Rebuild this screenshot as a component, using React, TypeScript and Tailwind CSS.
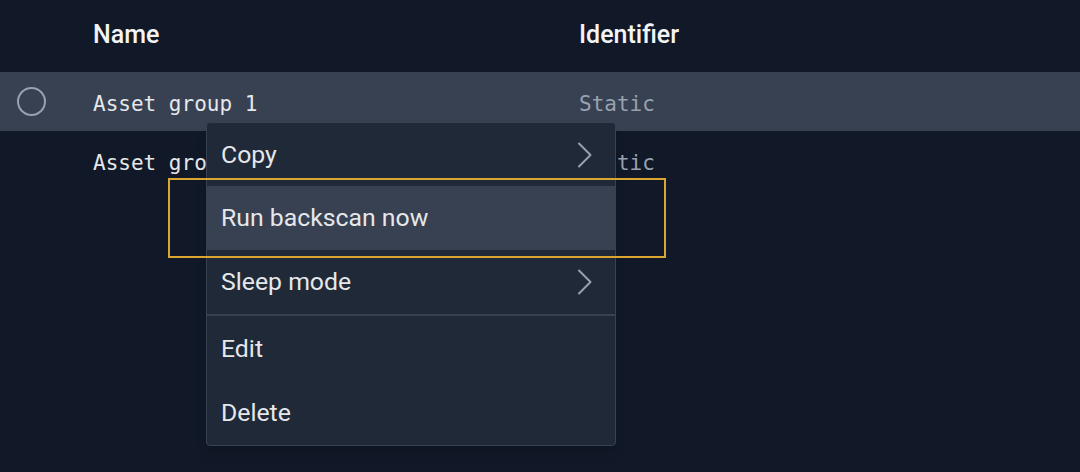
import { ReactNode } from "react";

interface Row {
  name: string;
  identifier: string;
  selected?: boolean;
}

const rows: Row[] = [
  { name: "Asset group 1", identifier: "Static", selected: true },
  { name: "Asset group 2", identifier: "Static" },
];

function Chevron() {
  return (
    <svg width="16" height="26" viewBox="0 0 16 26" fill="none" className="text-gray-400">
      <path d="M2 1.5 L13.5 13 L2 24.5" stroke="currentColor" strokeWidth="2" strokeLinecap="round" strokeLinejoin="round" />
    </svg>
  );
}

function MenuItem({ children, sub, active, className = "" }: { children: ReactNode; sub?: boolean; active?: boolean; className?: string }) {
  return (
    <div
      className={`flex items-center justify-between pl-[14px] pr-[22px] text-[24.8px] text-gray-200 ${
        active ? "bg-[#374151]" : ""
      } ${className}`}
    >
      <span>{children}</span>
      {sub && <Chevron />}
    </div>
  );
}

export default function App() {
  return (
    <div className="relative h-[472px] w-[1080px] overflow-hidden bg-[#111827] font-['Roboto',sans-serif]">
      {/* header */}
      <div className="flex h-[72px] items-center pb-[2px] text-[25px] font-medium text-gray-100">
        <div className="w-[579px] pl-[93px]">Name</div>
        <div>Identifier</div>
      </div>

      {rows.map((row) => (
        <div
          key={row.name}
          className={`flex h-[59px] items-center font-['DejaVu_Sans_Mono',monospace] text-[21px] ${
            row.selected ? "bg-[#374151]" : ""
          }`}
        >
          <div className="w-[93px] pl-[17px]">
            {row.selected && <div className="h-[29px] w-[29px] rounded-full border-2 border-gray-400" />}
          </div>
          <div className="w-[486px] pt-[6px] text-gray-200">{row.name}</div>
          <div className="pt-[6px] text-gray-400">{row.identifier}</div>
        </div>
      ))}

      {/* context menu */}
      <div className="absolute left-[206px] top-[122px] flex w-[410px] flex-col rounded-[4px] border border-[#374151] bg-[#1f2937] shadow-lg">
        <MenuItem sub className="h-[63px]">Copy</MenuItem>
        <MenuItem active className="h-[64px]">Run backscan now</MenuItem>
        <MenuItem sub className="h-[64px]">Sleep mode</MenuItem>
        <div className="h-[2px] bg-[#374151]" />
        <MenuItem className="h-[65px]">Edit</MenuItem>
        <MenuItem className="h-[64px]">Delete</MenuItem>
      </div>

      {/* highlight annotation */}
      <div className="pointer-events-none absolute left-[168px] top-[178px] h-[80px] w-[498px] border-2 border-[#dba531]" />
    </div>
  );
}
